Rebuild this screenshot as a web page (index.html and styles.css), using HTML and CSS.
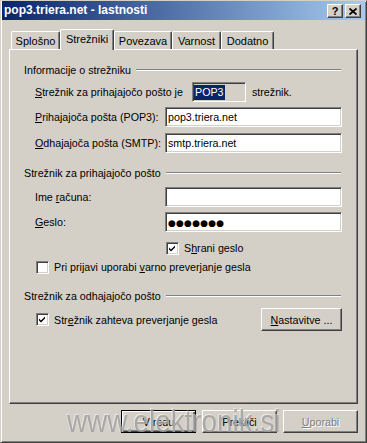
FILE: index.html
```html
<!DOCTYPE html>
<html lang="sl">
<head>
    <meta charset="UTF-8">
    <title>pop3.triera.net - lastnosti</title>
    <link rel="stylesheet" href="styles.css">
</head>
<body>
    <div class="window">
        <!-- Title bar -->
        <div class="titlebar">
            <span class="title">pop3.triera.net - lastnosti</span>
            <div class="title-buttons">
                <div class="tb tb-help">?</div>
                <div class="tb">
                    <svg width="8" height="7" viewBox="0 0 8 7"><path d="M0.5 0.5 L7.5 6.5 M7.5 0.5 L0.5 6.5" stroke="#000" stroke-width="1.7" fill="none"/></svg>
                </div>
            </div>
        </div>

        <!-- Tabs -->
        <div class="tabs">
            <div class="tab tab-1">Splošno</div>
            <div class="tab tab-2 active">Strežniki</div>
            <div class="tab tab-3">Povezava</div>
            <div class="tab tab-4">Varnost</div>
            <div class="tab tab-5">Dodatno</div>
        </div>

        <div class="panel">
            <div class="group-head g1">
                <span>Informacije o strežniku</span>
                <div class="line"></div>
            </div>
            <div class="row r-info">
                <span class="label-wide"><u>S</u>trežnik za prihajajočo pošto je</span>
                <div class="pop3-box"><span class="sel">POP3</span></div>
                <span class="after">strežnik.</span>
            </div>
            <div class="row r-in">
                <span class="label"><u>P</u>rihajajoča pošta (POP3):</span>
                <div class="field">pop3.triera.net</div>
            </div>
            <div class="row r-out">
                <span class="label"><u>O</u>dhajajoča pošta (SMTP):</span>
                <div class="field">smtp.triera.net</div>
            </div>

            <div class="group-head g2">
                <span>Strežnik za prihajajočo pošto</span>
                <div class="line"></div>
            </div>
            <div class="row r-user">
                <span class="label">Ime <u>r</u>ačuna:</span>
                <div class="field"></div>
            </div>
            <div class="row r-pass">
                <span class="label"><u>G</u>eslo:</span>
                <div class="field"><span class="dots">●●●●●●●</span></div>
            </div>
            <div class="check-row c-save">
                <div class="check checked">
                    <svg width="9" height="9" viewBox="0 0 9 9"><polygon points="1,3.5 3,5.5 7,1.5 7,3.5 3,7.5 1,5.5" fill="#000"/></svg>
                </div>
                <span>S<u>h</u>rani geslo</span>
            </div>
            <div class="check-row c-spa">
                <div class="check"></div>
                <span>Pri prijavi uporabi <u>v</u>arno preverjanje gesla</span>
            </div>

            <div class="group-head g3">
                <span>Strežnik za odhajajočo pošto</span>
                <div class="line"></div>
            </div>
            <div class="out-row">
                <div class="check-row">
                    <div class="check checked">
                        <svg width="9" height="9" viewBox="0 0 9 9"><polygon points="1,3.5 3,5.5 7,1.5 7,3.5 3,7.5 1,5.5" fill="#000"/></svg>
                    </div>
                    <span>Str<u>e</u>žnik zahteva preverjanje gesla</span>
                </div>
                <button class="btn btn-settings"><u>N</u>astavitve ...</button>
            </div>
        </div>

        <!-- Dialog buttons -->
        <div class="footer">
            <button class="btn default">V redu</button>
            <button class="btn">Prekliči</button>
            <button class="btn disabled"><u>U</u>porabi</button>
        </div>

        <div class="watermark">www.elektronik.si</div>
    </div>
</body>
</html>
```

FILE: styles.css
```css
body {
    margin: 0;
    background: #d4d0c8;
    font-family: "Liberation Sans", Arial, sans-serif;
    font-size: 10.7px;
    color: #000;
}
.window {
    position: relative;
    width: 367px;
    height: 443px;
    box-sizing: border-box;
    border: 1px solid;
    border-color: #d4d0c8 #404040 #404040 #d4d0c8;
    box-shadow: inset 1px 1px #fff, inset -1px -1px #808080;
    padding: 0 1px;
    background: #d4d0c8;
    overflow: hidden;
}

/* title bar */
.titlebar {
    display: flex;
    height: 19px;
    background: linear-gradient(to right, #0a246a, #a6caf0);
    color: #fff;
}
.title {
    flex: 1;
    font-weight: bold;
    font-size: 12px;
    line-height: 19px;
    padding-left: 2px;
}
.title-buttons {
    display: flex;
    gap: 2px;
    margin: 3px 4px 0 0;
}
.tb {
    box-sizing: border-box;
    width: 16px;
    height: 14px;
    background: #d4d0c8;
    border: 1px solid;
    border-color: #fff #404040 #404040 #fff;
    box-shadow: inset -1px -1px #808080;
    display: flex;
    align-items: center;
    justify-content: center;
    color: #000;
}
.tb-help {
    font-weight: bold;
    font-size: 11px;
    line-height: 12px;
}

/* tabs */
.tabs {
    display: flex;
    align-items: flex-end;
    height: 20px;
    margin-top: 9px;
    padding-left: 9px;
    font-size: 11px;
}
.tab {
    box-sizing: border-box;
    height: 18px;
    border: 1px solid;
    border-color: #fff #404040 transparent #fff;
    border-bottom: none;
    border-radius: 2px 2px 0 0;
    box-shadow: inset -1px 0 #808080;
    display: flex;
    align-items: center;
    justify-content: center;
}
.tab.active {
    position: relative;
    z-index: 1;
    height: 21px;
    margin-bottom: -1px;
    padding-bottom: 3px;
    background: #d4d0c8;
}
.tab-1 { width: 49px; }
.tab-2 { width: 54px; }
.tab-3 { width: 58px; }
.tab-4 { width: 49px; }
.tab-5 { width: 53px; }

/* panel */
.panel {
    box-sizing: border-box;
    height: 355px;
    margin: 0 7px;
    border: 1px solid;
    border-color: #fff #404040 #404040 #fff;
    box-shadow: inset -1px -1px #808080;
    padding: 0 15px 0 14px;
}
.group-head {
    display: flex;
    align-items: center;
    height: 14px;
}
.group-head .line {
    flex: 1;
    margin: 0 1px 0 5px;
    border-top: 1px solid #808080;
    border-bottom: 1px solid #fff;
}
.g1 { margin-top: 13px; }
.g2 { margin-top: 13px; }
.g3 { margin-top: 14px; }

.row {
    display: flex;
    align-items: center;
    height: 20px;
    padding-left: 11px;
}
.r-info { margin-top: 5px; }
.r-in { margin-top: 5px; }
.r-out { margin-top: 6px; }
.r-user { margin-top: 7px; }
.r-pass { margin-top: 5px; }
.label {
    width: 130px;
}
.label-wide {
    width: 157px;
}
.field, .pop3-box {
    box-sizing: border-box;
    height: 20px;
    border: 1px solid;
    border-color: #808080 #fff #fff #808080;
    box-shadow: inset 1px 1px #404040, inset -1px -1px #d4d0c8;
    background: #fff;
    padding-left: 2px;
    line-height: 18px;
    white-space: nowrap;
}
.field {
    flex: 1;
}
.pop3-box {
    width: 54px;
    background: #d4d0c8;
    padding-left: 1px;
    display: flex;
    align-items: center;
}
.sel {
    background: #0a246a;
    color: #fff;
    line-height: 15px;
    padding: 0 1px;
}
.after {
    margin-left: 6px;
}
.dots {
    font-family: "DejaVu Sans", sans-serif;
    font-size: 9px;
    letter-spacing: 0.2px;
}

/* check boxes */
.check-row {
    display: flex;
    align-items: center;
    height: 16px;
    gap: 5px;
}
.c-save {
    margin-top: 8px;
    padding-left: 142px;
}
.c-spa {
    margin-top: 3px;
    padding-left: 12px;
}
.check {
    box-sizing: border-box;
    width: 13px;
    height: 13px;
    background: #fff;
    border: 1px solid;
    border-color: #808080 #fff #fff #808080;
    box-shadow: inset 1px 1px #404040, inset -1px -1px #d4d0c8;
    display: flex;
    align-items: center;
    justify-content: center;
}
.out-row {
    display: flex;
    align-items: center;
    justify-content: space-between;
    height: 23px;
    margin-top: 5px;
    padding-left: 12px;
}

/* buttons */
.btn {
    box-sizing: border-box;
    width: 75px;
    height: 23px;
    padding: 0;
    border: 1px solid;
    border-color: #fff #404040 #404040 #fff;
    box-shadow: inset -1px -1px #808080;
    background: #d4d0c8;
    font: inherit;
    color: #000;
}
.btn-settings {
    width: 81px;
}
.btn.default {
    border-color: #000;
    box-shadow: inset 1px 1px #fff, inset -1px -1px #404040, inset -2px -2px #808080;
}
.btn.disabled {
    color: #808080;
    text-shadow: 1px 1px #fff;
}
.footer {
    display: flex;
    justify-content: flex-end;
    gap: 6px;
    margin: 6px 7px 0 0;
}

.watermark {
    position: absolute;
    left: 66px;
    top: 404px;
    font-size: 32px;
    line-height: 32px;
    color: #a2a2a2;
    text-shadow: -1px -1px 1px rgba(255, 255, 255, 0.7);
    transform: scaleX(0.87);
    transform-origin: left top;
    white-space: nowrap;
    opacity: 0.85;
}
```
